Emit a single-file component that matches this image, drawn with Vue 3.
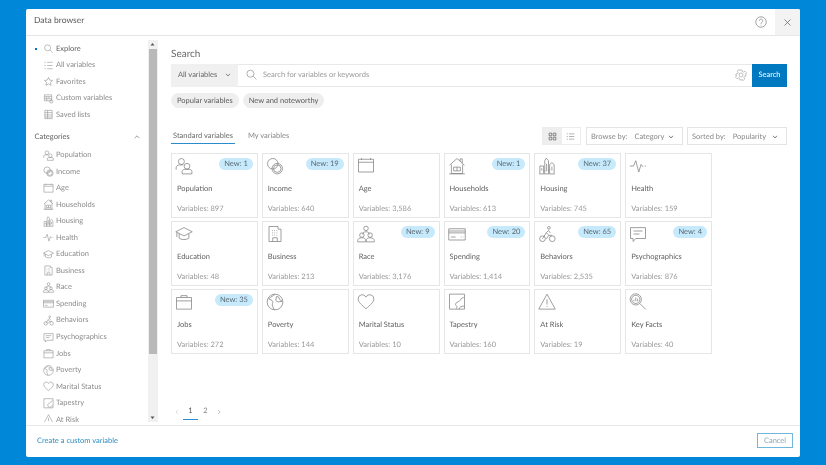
<script setup>
const P = {
  search: ['M10 4a6.500 6.500 0 1 0 0 13a6.500 6.500 0 1 0 0-13Z', 'M15 15l6 6'],
  list: ['M9 5h12M9 12h12M9 19h12', 'M3 5h3M3 12h3M3 19h3'],
  star: ['M12 3l2.700 6 6.300.7-4.700 4.300 1.300 6.500L12 17.200 6.400 20.500l1.300-6.500L3 9.700 9.300 9Z'],
  custom: ['M3 4h16v13H3Z', 'M3 8h16M8 8v9M3 12.500h5M13 8v4M8 12.500h11', 'M18 15a3.500 3.500 0 1 0 0 7a3.500 3.500 0 1 0 0-7Z'],
  saved: ['M4 3h16v18H4Z', 'M4 8h16M4 13h16M4 17.500h16M10 3v18'],
  population: ['M8.500 2a4 4 0 1 0 0 8a4 4 0 1 0 0-8Z', 'M1.500 17v-2.500c0-2.200 2-4 4.500-4h5', 'M16 8.500a3.800 3.800 0 1 0 0 7.600a3.800 3.800 0 1 0 0-7.600Z', 'M9.500 22.500v-3c0-1.800 1.500-3 3-3h7c1.800 0 3 1.300 3 3v3Z'],
  income: ['M9 2a7 7 0 1 0 0 14a7 7 0 1 0 0-14Z', 'M15 8.500a7 7 0 1 0 0 14a7 7 0 1 0 0-14Z', 'M15 10.500a5 5 0 1 0 0 10a5 5 0 1 0 0-10Z'],
  age: ['M2 3h20v17H2Z', 'M2 7h20', 'M6 1.500V4M18 1.500V4'],
  households: ['M2 11l10-9 7 6', 'M16 5.500V2.500h3v6l3 2.500', 'M4.500 10V22h15V10', 'M7.500 13.500h9v5h-9ZM12 13.500v5', 'M1.500 22.500h21'],
  housing: ['M1.500 22.500h21', 'M2.500 22V12h5v10', 'M9 22V5l2-3.500L14 5v17', 'M15.500 22V10l3-2.500 3 2.500v12', 'M5 15v3M11.500 9v10M18.500 13v5', 'M7.500 18h1.500M14 17h1.500'],
  health: ['M1 12h5l3-7 4 15 3-10 2 2.500h1', 'M21 12h1.500'],
  education: ['M12 3.500L1 9l11 5.500L23 9Z', 'M5.500 11.500v6c2 2.500 11 2.500 13 0v-6', 'M2.500 10v6'],
  business: ['M4 22V2h12v3.500h4V22Z', 'M8 7.500h1M11 7.500h1M14 7.500h1M8 10.500h1M11 10.500h1M14 10.500h1M8 13.500h1M11 13.500h1M14 13.500h1', 'M9 22v-5h6v5'],
  race: ['M12 1.500a3 3 0 1 0 0 6a3 3 0 1 0 0-6Z', 'M7.500 12.500c0-2.500 2-3.500 4.500-3.500s4.500 1 4.500 3.500', 'M6.500 10.500a3 3 0 1 0 0 6a3 3 0 1 0 0-6Z', 'M17.500 10.500a3 3 0 1 0 0 6a3 3 0 1 0 0-6Z', 'M1 22.500v-2c0-2 2-3.500 5.500-3.500s5 1.500 5 3.500v2Z', 'M12.500 22.500v-2c0-2 1.500-3.500 5-3.500s5.500 1.500 5.500 3.500v2Z'],
  spending: ['M1 5h22v15H1Z', 'M1 8h22M1 10.500h22', 'M4 16h6M17 16h1M20 16h.5'],
  behaviors: ['M6 14.500a3.800 3.800 0 1 0 0 7.600a3.800 3.800 0 1 0 0-7.600Z', 'M19 14.500a3.800 3.800 0 1 0 0 7.600a3.800 3.800 0 1 0 0-7.600Z', 'M6 18.300l5-8 3.500 3.500H19M11 10.300l3-3 2.500 3.500', 'M14.500 2a1.800 1.800 0 1 0 0 3.600a1.800 1.800 0 1 0 0-3.600Z', 'M11 18.500l3.500-4.700'],
  psycho: ['M2 3.500h20V18H9l-3.500 4v-4H2Z', 'M6 8h12M6 12h8'],
  jobs: ['M2 6h20v15.500H2Z', 'M8 6V3.500h8V6', 'M2 10.500h20'],
  poverty: ['M12 1.500a10.500 10.500 0 1 0 0 21a10.500 10.500 0 1 0 0-21Z', 'M12 1.500c-2 3-6 3-8.500 6.500 2 1 4.500 1 5.500 3s-2 4 0 7l2 4.500', 'M14 4.500l3 1 1 3 3.500 2.500-5.500 1-3-2Z'],
  heart: ['M12 21C7 16.500 1.500 12.500 1.500 8a5.500 5.500 0 0 1 10.500-2.500A5.500 5.500 0 0 1 22.500 8C22.500 12.500 17 16.500 12 21Z'],
  tapestry: ['M2 1.500h20v20H2Z', 'M21 6c-4 0-4 4-6 5s-5 2-5 4 2 2 2 4l-1 2', 'M15 21.500c0-3 3-4 6.500-4'],
  risk: ['M12 1.500L1 21.500h22Z', 'M12 8.500v7M12 17.500v1.200'],
  keyfacts: ['M9 1a7.500 7.500 0 1 0 0 15a7.500 7.500 0 1 0 0-15Z', 'M9 3a5.500 5.500 0 1 0 0 11a5.500 5.500 0 1 0 0-11Z', 'M6.500 11v-2M9 11V6M11.500 11V7.500', 'M14.500 14l8 8'],
}
const navTop = [
  { label: 'Explore', icon: 'search', active: true },
  { label: 'All variables', icon: 'list' },
  { label: 'Favorites', icon: 'star' },
  { label: 'Custom variables', icon: 'custom' },
  { label: 'Saved lists', icon: 'saved' },
]
const cats = [
  ['Population', 'population', '897', 1], ['Income', 'income', '640', 19], ['Age', 'age', '3,586'],
  ['Households', 'households', '613', 1], ['Housing', 'housing', '745', 37], ['Health', 'health', '159'],
  ['Education', 'education', '48'], ['Business', 'business', '213'], ['Race', 'race', '3,176', 9],
  ['Spending', 'spending', '1,414', 20], ['Behaviors', 'behaviors', '2,535', 65], ['Psychographics', 'psycho', '876', 4],
  ['Jobs', 'jobs', '272', 35], ['Poverty', 'poverty', '144'], ['Marital Status', 'heart', '10'],
  ['Tapestry', 'tapestry', '160'], ['At Risk', 'risk', '19'], ['Key Facts', 'keyfacts', '40'],
].map(([label, icon, count, fresh]) => ({ label, icon, count, fresh }))
const sideCats = cats.slice(0, 17)
</script>

<template>
  <div class="page">
    <section class="dialog">
      <header class="head">
        <span class="title">Data browser</span>
        <svg class="help" viewBox="0 0 24 24"><circle cx="12" cy="12" r="10.500"/><path d="M8.500 9.500a3.500 3.500 0 1 1 5.500 3c-1.300.9-2 1.500-2 3M12 17.500v1.500"/></svg>
        <button class="close"><svg viewBox="0 0 12 12"><path d="M2 2l8 8M10 2l-8 8"/></svg></button>
      </header>

      <div class="body">
        <aside class="side">
          <nav class="nav">
            <div v-for="n in navTop" :key="n.label" class="row" :class="{ on: n.active }">
              <i v-if="n.active" class="dot"></i>
              <svg class="ico" viewBox="0 0 24 24"><path v-for="d in P[n.icon]" :key="d" :d="d"/></svg>
              <span>{{ n.label }}</span>
            </div>
            <div class="cat-head">
              <span>Categories</span>
              <svg viewBox="0 0 10 10"><path d="M2 6.500l3-3 3 3"/></svg>
            </div>
            <div v-for="c in sideCats" :key="c.label" class="row">
              <svg class="ico" viewBox="0 0 24 24"><path v-for="d in P[c.icon]" :key="d" :d="d"/></svg>
              <span>{{ c.label }}</span>
            </div>
          </nav>
          <div class="bar">
            <svg viewBox="0 0 9 9"><path d="M4.500 3l2 2.500h-4Z"/></svg>
            <div class="thumb"></div>
            <svg class="down" viewBox="0 0 9 9"><path d="M4.500 6l2-2.500h-4Z"/></svg>
          </div>
        </aside>

        <main class="main">
          <h2>Search</h2>
          <div class="searchbar">
            <div class="scope"><span>All variables</span><svg viewBox="0 0 10 10"><path d="M2.500 3.500L5 6.200l2.500-2.700"/></svg></div>
            <div class="field">
              <svg class="mag" viewBox="0 0 24 24"><path v-for="d in P.search" :key="d" :d="d"/></svg>
              <span>Search for variables or keywords</span>
              <svg class="gear" viewBox="0 0 24 24"><circle cx="12" cy="12" r="4"/><path d="M10 2h4l.7 3 2.600 1.100L20 4.500 22.800 7.300 21.200 10 22 10v4l-3 .7-1.100 2.600 1.600 2.700-2.800 2.800-2.700-1.600L14 22h-4l-.7-3-2.600-1.100L4 19.500l-2.800-2.800 1.600-2.700L2 14v-4l3-.7 1.100-2.600L4.500 4l2.800-2.800L10 2.800Z"/></svg>
            </div>
            <button class="go">Search</button>
          </div>
          <div class="chips"><span>Popular variables</span><span>New and noteworthy</span></div>

          <div class="toolbar">
            <div class="tabs"><span class="tab cur">Standard variables</span><span class="tab">My variables</span></div>
            <div class="views">
              <span class="v cur"><svg viewBox="0 0 12 12"><path d="M1.500 1.500h3.500v3.500h-3.500ZM7 1.500h3.500v3.500H7ZM1.500 7h3.500v3.500h-3.500ZM7 7h3.500v3.500H7Z"/></svg></span>
              <span class="v"><svg viewBox="0 0 12 12"><path d="M4 2.500h7M4 6h7M4 9.500h7M1 2.500h1.500M1 6h1.500M1 9.500h1.500"/></svg></span>
            </div>
            <div class="dd browse"><span class="k">Browse by:</span><span>Category</span><svg viewBox="0 0 10 10"><path d="M2.500 3.500L5 6.200l2.500-2.700"/></svg></div>
            <div class="dd sorted"><span class="k">Sorted by:</span><span>Popularity</span><svg viewBox="0 0 10 10"><path d="M2.500 3.500L5 6.200l2.500-2.700"/></svg></div>
          </div>

          <div class="grid">
            <article v-for="c in cats" :key="c.label" class="card">
              <svg class="cico" viewBox="0 0 24 24"><path v-for="d in P[c.icon]" :key="d" :d="d"/></svg>
              <b>{{ c.label }}</b>
              <small>Variables: {{ c.count }}</small>
              <em v-if="c.fresh">New: {{ c.fresh }}</em>
            </article>
          </div>

          <div class="pager">
            <svg class="lt" viewBox="0 0 8 8"><path d="M5 1.500L2.500 4 5 6.500"/></svg>
            <span class="pg cur">1</span>
            <span class="pg">2</span>
            <svg viewBox="0 0 8 8"><path d="M3 1.500L5.500 4 3 6.500"/></svg>
          </div>
        </main>
      </div>

      <footer class="foot">
        <a>Create a custom variable</a>
        <button>Cancel</button>
      </footer>
    </section>
  </div>
</template>

<style>
html, body { margin: 0; background: #0087d7; }
</style>

<style scoped>
* { box-sizing: border-box; }
.page { width: 826px; height: 465px; padding: 9px 26px 8px; background: #0087d7; font: 7.500px/12px Lato, "Open Sans", sans-serif; text-rendering: geometricPrecision; color: #6a6a6a; overflow: hidden; filter: blur(.3px); white-space: nowrap; }
svg { fill: none; stroke: currentColor; stroke-width: 1; display: block; flex: none; }
button { font: inherit; padding: 0; border: 0; background: none; color: inherit; text-rendering: geometricPrecision; }
.dialog { width: 774px; height: 448px; background: #fff; border-radius: 2px; display: flex; flex-direction: column; overflow: hidden; }
.head { height: 27px; flex: none; display: flex; align-items: center; padding-left: 8px; border-bottom: 1px solid #e6e6e6; }
.title { flex: 1; font-size: 8.500px; color: #5a5a5a; margin-top: -4px; }
.help { width: 12px; height: 12px; margin-right: 8px; color: #808080; stroke-width: 1.400; }
.close { width: 25px; height: 26px; background: #f3f3f3; display: flex; align-items: center; justify-content: center; color: #666; }
.close svg { width: 9px; height: 9px; }

.body { height: 389px; flex: none; display: flex; }
.side { width: 132px; flex: none; display: flex; padding-top: 4px; padding-bottom: 3px; }
.nav { width: 123px; overflow: hidden; padding-top: .5px; }
.row { height: 16.550px; display: flex; align-items: center; padding-left: 17px; color: #8c8c8c; position: relative; gap: 2px; }
.row .ico { width: 11px; height: 11px; color: #8a8a8a; stroke-width: 1.200; }
.row.on { color: #5f5f5f; }
.dot { position: absolute; left: 9px; top: 7px; width: 2px; height: 2px; background: #0079c1; }
.cat-head { height: 16px; margin: 5.500px 0 2px; padding: 0 7px 0 8.500px; display: flex; align-items: center; justify-content: space-between; color: #5f5f5f; }
.cat-head svg { width: 8px; height: 8px; color: #888; }
.bar { width: 10px; background: #f1f1f1; display: flex; flex-direction: column; color: #555; }
.bar svg { width: 9px; height: 9px; fill: #555; stroke: none; }
.thumb { height: 305px; width: 8px; margin-left: 1px; background: #b9b9b9; }
.bar .down { margin-top: auto; }

.main { flex: 1; padding: 12px 13px 0; min-width: 0; }
h2 { margin: 0; font-size: 10px; line-height: 12px; font-weight: 400; color: #6a6a6a; }
.searchbar { margin-top: 3.500px; height: 23px; display: flex; border: solid #e8e8e8; border-width: 1px 0; }
.scope { width: 67px; background: #f0f0f0; display: flex; align-items: center; padding-left: 7px; gap: 7px; margin: -1px 0; color: #666; }
.scope svg { width: 8px; height: 8px; }
.field { flex: 1; display: flex; align-items: center; padding: 0 0 1px 7px; color: #999; }
.mag { width: 13px; height: 13px; margin-right: 5px; color: #888; stroke-width: 1.200; }
.field span { flex: 1; }
.gear { width: 12px; height: 12px; margin-right: 5px; color: #999; stroke-width: 1.200; }
.go { width: 35px; margin: -1px 0; background: #0079c1; color: #fff; }
.chips { display: flex; gap: 4px; margin-top: 6.500px; }
.chips span { height: 15px; line-height: 15px; padding: 0 6px; border-radius: 8px; background: #eeeeee; color: #5a5a5a; }
.toolbar { display: flex; align-items: flex-start; margin-top: 19px; height: 26px; }
.tabs { flex: 1; display: flex; gap: 11px; }
.tab { height: 17px; padding: 3px 2px 0; color: #888; }
.tab.cur { border-bottom: 1px solid #2a8ccc; color: #6a6a6a; }
.views { width: 39px; height: 18px; display: flex; border: 1px solid #ececec; margin-right: 5px; color: #777; }
.v { flex: 1; display: flex; align-items: center; justify-content: center; }
.v.cur { background: #eee; color: #666; }
.v svg { width: 9px; height: 9px; }
.v + .v { color: #999; }
.dd { height: 18px; border: 1px solid #e4e4e4; display: flex; align-items: center; padding: 1px 7px 0 4px; color: #888; }
.dd .k { margin-right: 7px; }
.dd svg { width: 8px; height: 8px; margin-left: auto; color: #555; }
.browse { width: 97px; margin-right: 4px; }
.sorted { width: 100px; }

.grid { width: 541px; display: grid; grid-template-columns: repeat(6, 1fr); grid-auto-rows: 65px; gap: 3px 4px; }
.card { border: 1px solid #e6e6e6; position: relative; padding: 3px 5px 0; display: flex; flex-direction: column; }
.cico { width: 18px; height: 18px; margin-left: -2px; color: #808080; }
.card b { font-weight: 400; color: #5f5f5f; margin-top: 8px; }
.card small { font-size: 7.500px; color: #9a9a9a; margin-top: 8px; }
.card em { position: absolute; top: 4px; right: 4px; height: 12px; line-height: 12px; padding: 0 5px; border-radius: 6px; background: #c6e9fc; color: #5a6a72; font-style: normal; }

.pager { display: flex; align-items: center; margin-top: 50px; height: 16px; color: #aaa; padding-left: 3px; }
.pager svg { width: 6px; height: 6px; }
.pager .lt { color: #ccc; }
.pg { width: 15px; height: 15px; text-align: center; color: #888; }
.pg.cur { margin-left: 3px; border-bottom: 1px solid #2a8ccc; color: #555; }
.pg + svg { margin-left: 3px; }

.foot { flex: 1; border-top: 1px solid #e8e8e8; display: flex; align-items: center; justify-content: space-between; padding: 0 7px 2px 11px; }
.foot a { color: #2b8cc4; }
.foot button { width: 36px; height: 15px; border: 1px solid #6fb7dd; color: #8aa5b5; background: #fff; }
</style>
